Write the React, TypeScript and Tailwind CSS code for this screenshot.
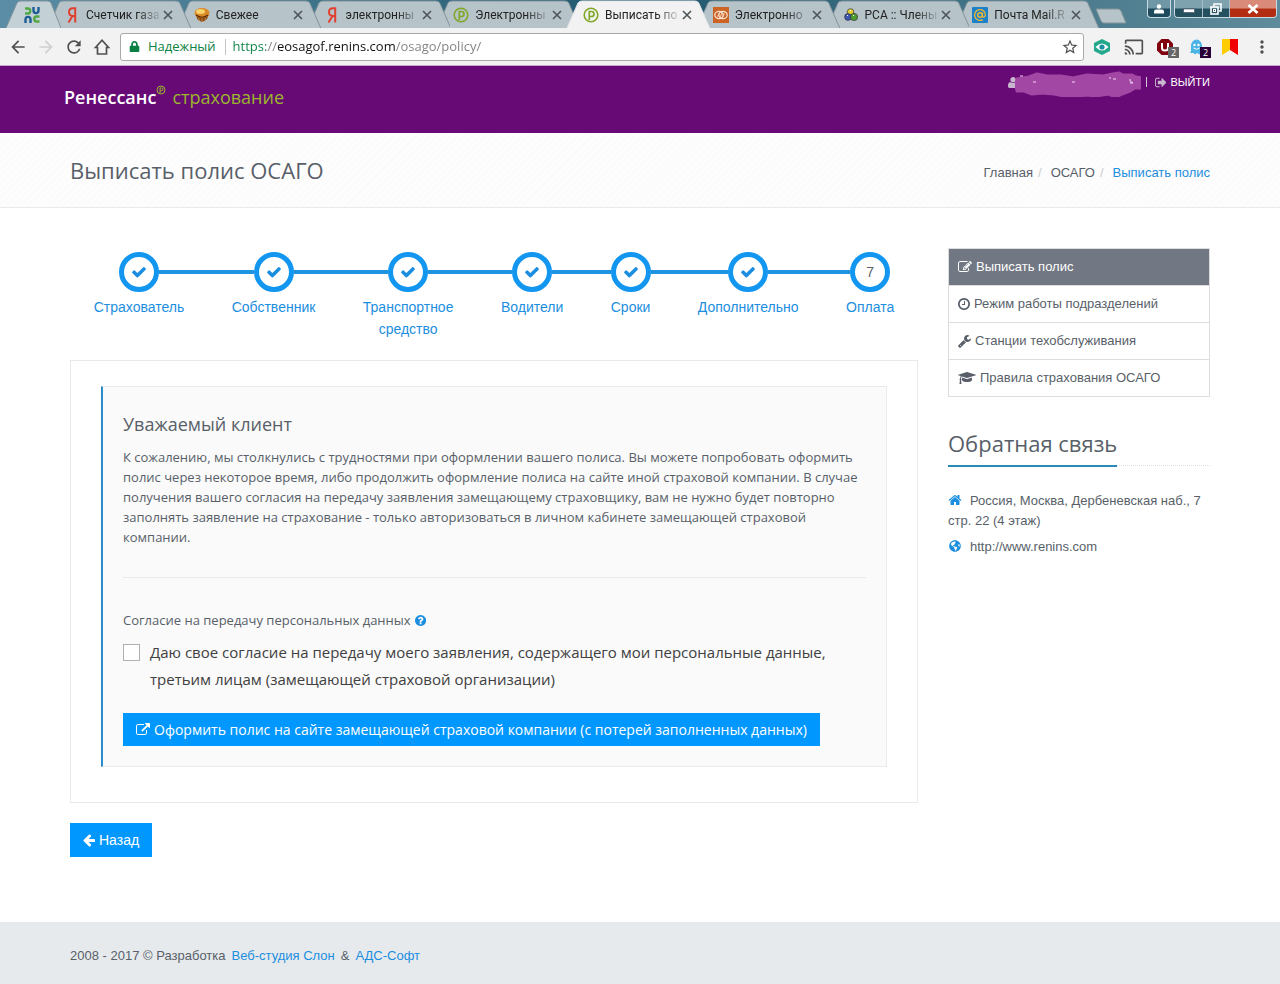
import { useState } from "react";
import type { ReactNode } from "react";
import { FaGlobeAmericas, FaLock } from "react-icons/fa";
import { MdArrowBack, MdArrowForward, MdCast, MdMoreVert, MdRefresh, MdStarBorder } from "react-icons/md";

// Font Awesome 4 glyphs, cut to their advance width: [viewBox, path]
const GLYPHS = {
  check: ["0 0 1792 1792", "M1671 566q0 40-28 68l-724 724-136 136q-28 28-68 28t-68-28l-136-136-362-362q-28-28-28-68t28-68l136-136q28-28 68-28t68 28l294 295 656-657q28-28 68-28t68 28l136 136q28 28 28 68z"],
  home: ["0 0 1792 1792", "M1472 992v480q0 26-19 45t-45 19h-384v-384h-256v384h-384q-26 0-45-19t-19-45v-480q0-1 .5-3t.5-3l575-474 575 474q1 2 1 6zm223-69l-62 74q-8 9-21 11h-3q-13 0-21-7l-692-577-692 577q-12 8-24 7-13-2-21-11l-62-74q-8-10-7-23.5t11-21.5l719-599q32-26 76-26t76 26l244 204v-195q0-14 9-23t23-9h192q14 0 23 9t9 23v408l219 182q10 8 11 21.5t-7 23.5z"],
  external: ["0 0 1792 1792", "M1408 928v320q0 119-84.5 203.5t-203.5 84.5h-832q-119 0-203.5-84.5t-84.5-203.5v-832q0-119 84.5-203.5t203.5-84.5h704q14 0 23 9t9 23v64q0 14-9 23t-23 9h-704q-66 0-113 47t-47 113v832q0 66 47 113t113 47h832q66 0 113-47t47-113v-320q0-14 9-23t23-9h64q14 0 23 9t9 23zm384-864v512q0 26-19 45t-45 19-45-19l-176-176-652 652q-10 10-23 10t-23-10l-114-114q-10-10-10-23t10-23l652-652-176-176q-19-19-19-45t19-45 45-19h512q26 0 45 19t19 45z"],
  edit: ["0 0 1792 1792", "M888 1184l116-116-152-152-116 116v56h96v96h56zm440-720q-16-16-33 1l-350 350q-17 17-1 33t33-1l350-350q17-17 1-33zm80 594v190q0 119-84.5 203.5t-203.5 84.5h-832q-119 0-203.5-84.5t-84.5-203.5v-832q0-119 84.5-203.5t203.5-84.5h832q63 0 117 25 15 7 18 23 3 17-9 29l-49 49q-14 14-32 8-23-6-45-6h-832q-66 0-113 47t-47 113v832q0 66 47 113t113 47h832q66 0 113-47t47-113v-126q0-13 9-22l64-64q15-15 35-7t20 29zm-96-738l288 288-672 672h-288v-288zm444 132l-92 92-288-288 92-92q28-28 68-28t68 28l152 152q28 28 28 68t-28 68z"],
  clock: ["128 0 1536 1792", "M1024 544v448q0 14-9 23t-23 9h-320q-14 0-23-9t-9-23v-64q0-14 9-23t23-9h224v-352q0-14 9-23t23-9h64q14 0 23 9t9 23zm416 352q0-148-73-273t-198-198-273-73-273 73-198 198-73 273 73 273 198 198 273 73 273-73 198-198 73-273zm224 0q0 209-103 385.5t-279.5 279.5-385.5 103-385.5-103-279.5-279.5-103-385.5 103-385.5 279.5-279.5 385.5-103 385.5 103 279.5 279.5 103 385.5z"],
  wrench: ["64 0 1664 1792", "M448 1472q0-26-19-45t-45-19-45 19-19 45 19 45 45 19 45-19 19-45zm644-420l-682 682q-37 37-90 37-52 0-91-37l-106-108q-38-36-38-90 0-53 38-91l681-681q39 98 114.5 173.5t173.5 114.5zm634-435q0 39-23 106-47 134-164.5 217.5t-258.5 83.5q-185 0-316.5-131.5t-131.5-316.5 131.5-316.5 316.5-131.5q58 0 121.5 16.5t107.5 46.5q16 11 16 28t-16 28l-293 169v224l193 107q5-3 79-48.5t135.5-81 70.5-35.5q15 0 23.5 10t8.5 25z"],
  cap: ["0 0 2304 1792", "M1774 836l18 316q4 69-82 128t-235 93.5-323 34.5-323-34.5-235-93.5-82-128l18-316 574 181q22 7 48 7t48-7zm530-324q0 23-22 31l-1120 352q-4 1-10 1t-10-1l-652-206q-43 34-71 111.5t-34 178.5q63 36 63 109 0 69-58 107l58 433q2 14-8 25-9 11-24 11h-192q-15 0-24-11-10-11-8-25l58-433q-58-38-58-107 0-73 65-111 11-207 98-330l-333-104q-22-8-22-31t22-31l1120-352q4-1 10-1t10 1l1120 352q22 8 22 31z"],
  question: ["128 0 1536 1792", "M1024 1376v-192q0-14-9-23t-23-9h-192q-14 0-23 9t-9 23v192q0 14 9 23t23 9h192q14 0 23-9t9-23zm256-672q0-88-55.5-163t-138.5-116-170-41q-243 0-371 213-15 24 8 42l132 100q7 6 19 6 16 0 25-12 53-68 86-92 34-24 86-24 48 0 85.5 26t37.5 59q0 38-20 61t-68 45q-63 28-115.5 86.5t-52.5 125.5v36q0 14 9 23t23 9h192q14 0 23-9t9-23q0-19 21.5-49.5t54.5-49.5q32-18 49-28.5t46-35 44.5-48 28-60.5 12.5-81zm384 192q0 209-103 385.5t-279.5 279.5-385.5 103-385.5-103-279.5-279.5-103-385.5 103-385.5 279.5-279.5 385.5-103 385.5 103 279.5 279.5 103 385.5z"],
  back: ["128 0 1536 1792", "M1664 896v128q0 53-32.5 90.5t-84.5 37.5h-704l293 294q38 36 38 90t-38 90l-75 76q-37 37-90 37-52 0-91-37l-651-652q-37-37-37-90 0-52 37-91l651-650q38-38 91-38 52 0 90 38l75 74q38 38 38 91t-38 91l-293 293h704q52 0 84.5 37.5t32.5 90.5z"],
  signout: ["64 0 1600 1792", "M704 1440q0 4 1 20t.5 26.5-3 23.5-10 19.5-20.5 6.5h-320q-119 0-203.5-84.5t-84.5-203.5v-704q0-119 84.5-203.5t203.5-84.5h320q13 0 22.5 9.5t9.5 22.5q0 4 1 20t.5 26.5-3 23.5-10 19.5-20.5 6.5h-320q-66 0-113 47t-47 113v704q0 66 47 113t113 47h312l11.5 1 11.5 3 8 5.5 7 9 2 13.5zm928-544q0 26-19 45l-544 544q-19 19-45 19t-45-19-19-45v-288h-448q-26 0-45-19t-19-45v-384q0-26 19-45t45-19h448v-288q0-26 19-45t45-19 45 19l544 544q19 19 19 45z"],
  user: ["192 0 1408 1792", "M1600 1405q0 120-73 189.5t-194 69.5h-874q-121 0-194-69.5t-73-189.5q0-53 3.5-103.5t14-109 26.5-108.5 43-97.5 62-81 85.5-53.5 111.5-20q9 0 42 21.5t74.5 48 108 48 133.5 21.5 133.5-21.5 108-48 74.5-48 42-21.5q61 0 111.5 20t85.5 53.5 62 81 43 97.5 26.5 108.5 14 109 3.5 103.5zm-320-893q0 159-112.5 271.5t-271.5 112.5-271.5-112.5-112.5-271.5 112.5-271.5 271.5-112.5 271.5 112.5 112.5 271.5z"],
};

type GlyphName = keyof typeof GLYPHS;

function Glyph({ name, className = "h-[14px]" }: { name: GlyphName; className?: string }) {
  const [box, d] = GLYPHS[name];
  return (
    <svg viewBox={box} className={`inline-block w-auto shrink-0 fill-current ${className}`} aria-hidden="true">
      <path d={d} />
    </svg>
  );
}

/* ---------- browser window ---------- */

const Yandex = () => (
  <svg viewBox="0 0 16 16" className="size-4 shrink-0" fill="none" stroke="#e0402f" strokeWidth="2">
    <path d="M11.2 15.5V1.2H9C6.3 1.2 5 2.8 5 5c0 2.400 1.400 3.900 4 3.900h2.200M8.500 9l-4 6.500" />
  </svg>
);

const Muffin = () => (
  <svg viewBox="0 0 16 16" className="size-4 shrink-0">
    <path d="M1.500 7l2 5.500Q8 17 13 12l2-5z" fill="#8a4a12" />
    <path d="M4.500 11l1 3M8 11.500v3M11.500 11l-.5 2.500" stroke="#c98a3c" strokeWidth="1" />
    <ellipse cx="8" cy="6" rx="7.500" ry="5" fill="#d98a26" />
    <ellipse cx="6.500" cy="4.500" rx="4.500" ry="2.500" fill="#f9d36a" />
    <path d="M2 8q6 4.500 12 0" stroke="#5c2a06" strokeWidth="1.200" fill="none" />
  </svg>
);

const Renins = () => (
  <svg viewBox="0 0 16 16" className="size-4 shrink-0" fill="none" stroke="#80a828">
    <circle cx="8" cy="8" r="6.800" strokeWidth="1.600" />
    <path d="M6.300 13V4.500h2.200a2.500 2.500 0 0 1 0 5H6.300" strokeWidth="1.700" />
  </svg>
);

const Rings = () => (
  <svg viewBox="0 0 16 16" className="size-4 shrink-0" fill="none" stroke="#fbe3d0">
    <rect width="16" height="16" fill="#cd6426" stroke="none" />
    <ellipse cx="6" cy="8" rx="4.200" ry="3.600" strokeWidth="1.200" />
    <ellipse cx="10" cy="8" rx="4.200" ry="3.600" strokeWidth="1.200" />
    <path d="M4.500 9.500l2-3.500M7 10l2-4M9.500 10l2-3.500" strokeWidth=".9" />
  </svg>
);

const Cubes = () => (
  <svg viewBox="0 0 16 16" className="size-4 shrink-0" stroke="#333" strokeWidth=".7">
    <circle cx="7.500" cy="5" r="3.300" fill="#e3cf2c" />
    <circle cx="5" cy="10" r="3.400" fill="#3f55b5" />
    <circle cx="11" cy="10" r="3.600" fill="#4d9c2f" />
    <path d="M4 9l1-1M10 9l1-1M7 4l1-1" stroke="#fff" strokeWidth="1" />
  </svg>
);

const MailRu = () => (
  <svg viewBox="0 0 16 16" className="size-4 shrink-0" fill="none">
    <rect width="16" height="16" rx="1" fill="#1b82c8" />
    <circle cx="8" cy="8" r="2.300" stroke="#f2b632" strokeWidth="1.400" />
    <path d="M10.400 5.500v3.300c0 2 3 1.700 3-.8A5.400 5.400 0 1 0 10.800 12.600" stroke="#f2b632" strokeWidth="1.300" />
  </svg>
);

const PinnedLogo = () => (
  <svg viewBox="0 0 16 16" className="size-4" fill="none" strokeWidth="2.400">
    <path d="M1 1.500h3c3 0 3 5 0 5H1" stroke="#52a844" />
    <path d="M9.500 0v3.500c0 3.500 5 3.500 5 0V0" stroke="#1f5d94" />
    <path d="M1.500 16v-3.500c0-3.500 5-3.500 5 0V16" stroke="#1f5d94" />
    <path d="M15.500 9.500h-3c-3 0-3 5 0 5h3" stroke="#52a844" />
  </svg>
);

const TABS = [
  { title: "Счетчик газа", icon: <Yandex /> },
  { title: "Свежее", icon: <Muffin /> },
  { title: "электронны", icon: <Yandex /> },
  { title: "Электронны", icon: <Renins /> },
  { title: "Выписать по", icon: <Renins />, active: true },
  { title: "Электронно", icon: <Rings /> },
  { title: "РСА :: Члены", icon: <Cubes /> },
  { title: "Почта Mail.R", icon: <MailRu /> },
];

function TabShape({ active = false }: { active?: boolean }) {
  return (
    <svg viewBox="0 0 143 28" preserveAspectRatio="none" className="absolute inset-0 -z-10 size-full" aria-hidden="true">
      <path
        d="M0 28L11 3Q12 1 15 1H128Q131 1 132 3L143 28"
        className={active ? "fill-[#f2f2f2]" : "fill-[#b6c3c9]"}
        stroke={active ? "#dfe4e6" : "#82949b"}
        strokeWidth="1"
      />
    </svg>
  );
}

function BrowserTab({ title, icon, active = false, order }: { title: string; icon: ReactNode; active?: boolean; order: number }) {
  return (
    <div className="relative isolate -ml-[13px] flex h-7 min-w-0 flex-1 items-center pt-px pr-[18px] pl-4" style={{ zIndex: active ? 30 : order }}>
      <TabShape active={active} />
      {icon}
      <span className="ml-[6px] min-w-0 flex-1 overflow-hidden whitespace-nowrap text-[#222] [mask-image:linear-gradient(to_right,#000_70%,transparent_105%)]">{title}</span>
      <button type="button" aria-label="Закрыть вкладку" className="ml-1 flex size-[10px] items-center justify-center text-[#4c5459]">
        <svg viewBox="0 0 10 10" className="size-[10px]" stroke="currentColor" strokeWidth="1.600">
          <path d="M1 1l8 8M9 1L1 9" />
        </svg>
      </button>
    </div>
  );
}

function WindowControls() {
  return (
    <div className="mr-[3px] ml-4 flex h-[18px] shrink-0 gap-[3px] text-white">
      <button type="button" aria-label="Профиль" className="flex w-[24px] items-center justify-center rounded-b border border-t-0 border-[#c9dbe1] bg-linear-to-b from-[#6f97a6] from-45% to-[#1d4a5c] to-55%">
        <svg viewBox="0 0 12 12" className="size-3 fill-current"><circle cx="6" cy="3.500" r="2.200" /><path d="M1 10.500V8.500q0-2 2-2h6q2 0 2 2v2z" /></svg>
      </button>
      <div className="flex overflow-hidden rounded-b border border-t-0 border-[#c9dbe1]">
        <button type="button" aria-label="Свернуть" className="flex w-[28px] items-center justify-center border-r border-[#a9bfc7] bg-linear-to-b from-[#7fa2af] from-45% to-[#24505f] to-55%">
          <svg viewBox="0 0 12 12" className="size-3 fill-current stroke-[#445]"><rect x=".5" y="6" width="11" height="3.500" strokeWidth=".6" /></svg>
        </button>
        <button type="button" aria-label="Развернуть" className="flex w-[27px] items-center justify-center border-r border-[#a9bfc7] bg-linear-to-b from-[#7fa2af] from-45% to-[#24505f] to-55%">
          <svg viewBox="0 0 12 12" className="size-3" fill="none" stroke="currentColor" strokeWidth="1.600"><path d="M4 3V1h7v7H9" /><rect x="1" y="4" width="7" height="7" /><rect x="3.500" y="6.500" width="2" height="2" strokeWidth="1" /></svg>
        </button>
        <button type="button" aria-label="Закрыть" className="flex w-[46px] items-center justify-center bg-linear-to-b from-[#d98a78] from-45% to-[#b32d12] to-55%">
          <svg viewBox="0 0 12 12" className="size-3" stroke="currentColor" strokeWidth="2.800"><path d="M1.500 2l9 8M10.500 2l-9 8" /></svg>
        </button>
      </div>
    </div>
  );
}

function BrowserChrome() {
  return (
    <div className="font-['Open_Sans',sans-serif] text-xs">
      <div className="flex h-7 items-start bg-linear-to-r from-[#5b8ea6] via-[#1f586e] to-[#5f8c9c] pl-[6px] font-['Roboto',sans-serif]">
        <div className="relative isolate z-20 flex h-7 w-[55px] shrink-0 items-center justify-center pt-px pr-1">
          <svg viewBox="0 0 55 28" className="absolute inset-0 -z-10 size-full" aria-hidden="true">
            <path d="M0 28L11 3Q12 1 15 1H41Q44 1 45 3L55 28" fill="#c3d0d5" stroke="#82949b" />
          </svg>
          <PinnedLogo />
        </div>
        <div className="flex min-w-0 flex-1">
          {TABS.map((tab, i) => (
            <BrowserTab key={i} {...tab} order={TABS.length - i} />
          ))}
        </div>
        <button type="button" aria-label="Новая вкладка" className="mt-2 -ml-1 mr-1 shrink-0">
          <svg viewBox="0 0 32 16" className="h-4 w-8"><path d="M1 1h22q2 0 3 2l5 12H9q-2 0-3-2z" fill="#b6c3c9" stroke="#82949b" /></svg>
        </button>
        <WindowControls />
      </div>
      <div className="flex h-[38px] items-center border-b border-[#c9a6d3] bg-[#f2f2f2] pr-2 pl-2 text-[#505050]">
        <div className="flex shrink-0 items-center gap-2 pr-2">
          <button type="button" aria-label="Назад"><MdArrowBack className="size-5" /></button>
          <button type="button" aria-label="Вперед" className="text-[#cfcfcf]"><MdArrowForward className="size-5" /></button>
          <button type="button" aria-label="Обновить"><MdRefresh className="size-5" /></button>
          <button type="button" aria-label="Домой">
            <svg viewBox="0 0 20 20" className="size-5" fill="none" stroke="currentColor" strokeWidth="1.700"><path d="M3.500 10.500L10 3.200l6.500 7.300h-2V17h-9v-6.500z" /></svg>
          </button>
        </div>
        <div className="flex h-7 min-w-0 flex-1 items-center rounded-[3px] border border-[#a9a9a9] bg-white pr-1 pl-2 text-[13px]">
          <FaLock className="mr-2 size-[11px] text-[#0b8043]" />
          <label htmlFor="address" className="mr-[9px] text-[#0b8043]">Надежный</label>
          <span className="mr-[7px] h-4 w-px bg-[#c4c4c4]" />
          <input
            id="address"
            type="text"
            defaultValue="https://eosagof.renins.com/osago/policy/"
            className="min-w-0 flex-1 bg-[linear-gradient(to_right,#0b8043_0_33px,#808080_33px_45px,#111_45px_163px,#808080_163px)] bg-clip-text text-transparent outline-none"
          />
          <MdStarBorder className="size-[18px]" />
        </div>
        <div className="flex shrink-0 items-center pl-2">
          <svg viewBox="0 0 20 20" className="mr-3 size-5"><path d="M10 2l8 4v8l-8 4-8-4V6z" fill="#23a88b" /><path d="M3.500 10q6.500-7 13 0-6.500 7-13 0z" fill="#fff" /><circle cx="10" cy="10" r="2.600" fill="#1d8fa0" /></svg>
          <MdCast className="mr-3 size-5" />
          <span className="relative mr-3 size-5">
            <svg viewBox="0 0 20 20" className="size-5"><path d="M5.500 2h7L17 6.500v7L12.500 18h-7L1 13.500v-7z" fill="#800010" /><path d="M6 6v5q0 2.500 3 2.500t3-2.500V6" fill="none" stroke="#fff" strokeWidth="2" /></svg>
            <span className="absolute top-[10px] left-[12px] h-[11px] w-[11px] bg-[#666] text-center text-[9px] leading-[11px] text-white">2</span>
          </span>
          <span className="relative mr-3 size-5">
            <svg viewBox="0 0 20 20" className="size-5"><path d="M3 9a5.500 6.500 0 0 1 11 0v5l2 2h-3l-1.500 1.500L9 16l-2 1.500L5.500 16H2l1-2z" fill="#4db4e6" /><circle cx="6.500" cy="8" r="1.200" fill="#fff" /><circle cx="10.500" cy="8" r="1.200" fill="#fff" /><path d="M5.500 11q3 2.500 6 0" stroke="#fff" fill="none" /></svg>
            <span className="absolute top-[10px] left-[12px] h-[11px] w-[11px] bg-[#2a0038] text-center text-[9px] leading-[11px] text-white">2</span>
          </span>
          <svg viewBox="0 0 20 20" className="mr-3 size-5"><path d="M2 2h8v11l-8 5z" fill="#fc0" /><path d="M10 2h8v16l-8-5z" fill="#f00000" /></svg>
          <MdMoreVert className="size-5" />
        </div>
      </div>
    </div>
  );
}

/* ---------- page ---------- */

const STEPS = ["Страхователь", "Собственник", "Транспортное\nсредство", "Водители", "Сроки", "Дополнительно", "Оплата"];

const MENU: { icon: GlyphName; text: string; active?: boolean }[] = [
  { icon: "edit", text: "Выписать полис", active: true },
  { icon: "clock", text: "Режим работы подразделений" },
  { icon: "wrench", text: "Станции техобслуживания" },
  { icon: "cap", text: "Правила страхования ОСАГО" },
];

function Header() {
  return (
    <header className="bg-[#670a76]">
      <div className="mx-auto flex h-[67px] max-w-[1152px] items-start justify-between pr-[6px]">
        <a href="#" className="mt-[17px] flex items-baseline font-['Open_Sans',sans-serif] text-[18px] leading-7">
          <span className="font-semibold text-white">Ренессанс</span>
          <svg viewBox="0 0 10 10" className="mt-[2px] mr-[6px] size-[10px] self-start" fill="none" stroke="#9bb52c">
            <circle cx="5" cy="5" r="4" strokeWidth="1" />
            <path d="M4 8V3h1.500a1.400 1.400 0 0 1 0 2.800H4" strokeWidth="1" />
          </svg>
          <span className="text-[#9bb52c]">страхование</span>
        </a>
        <div className="mt-[6px] flex h-5 items-center text-[11px] text-white">
          <Glyph name="user" className="h-[13px] text-[#c9b6cf]" />
          <svg viewBox="0 0 126 26" className="-ml-[3px] h-[26px] w-[126px] translate-y-[2px]" aria-hidden="true">
            <path
              d="M2 8l12-2 8-3 10 2 14 0 12 2 14-3 16 1 10-2 6-1 4 2 9 0 4 2 7 1 1 6-2 4-7 0-5 3-8 3-6 3-8-3-12 2-9-1-8 1-3 2-3-2-9 0-10-2-12-1-10 1-8-3-7 0-1-5z"
              fill="#a347a5"
              stroke="#a347a5"
              strokeWidth="3"
              strokeLinejoin="round"
            />
            <path d="M5 5h3M18 11h3M57 11h3M94 7h2M98 8h3M115 8v2l3 2h-3" stroke="#f0dcf2" fill="none" />
          </svg>
          <span className="mr-2 ml-[5px] h-[10px] w-px bg-[#d9c6dd]" />
          <a href="#" className="flex items-center gap-1">
            <Glyph name="signout" className="h-[13px] text-[#c9b6cf]" />
            ВЫЙТИ
          </a>
        </div>
      </div>
    </header>
  );
}

function TitleBar() {
  return (
    <div className="border-b border-[#eaeaea] bg-[repeating-linear-gradient(135deg,#fbfbfb_0_2px,#fdfdfd_2px_5px)]">
      <div className="mx-auto flex h-[74px] max-w-[1140px] items-center justify-between">
        <h1 className="font-['Open_Sans',sans-serif] text-[22px]">Выписать полис ОСАГО</h1>
        <nav className="mt-[6px] flex text-[13px]">
          <a href="#">Главная</a>
          <span className="mr-[9px] ml-[5px] text-[#ccc]">/</span>
          <a href="#">ОСАГО</a>
          <span className="mr-[9px] ml-[5px] text-[#ccc]">/</span>
          <a href="#" className="text-[#1c8ee0]">Выписать полис</a>
        </nav>
      </div>
    </div>
  );
}

function Steps() {
  return (
    <ol className="flex pt-1 text-sm leading-[22px]">
      {STEPS.map((label, i) => {
        const last = i === STEPS.length - 1;
        return (
          <li key={label} className="flex flex-auto flex-col items-center">
            <div className="flex w-full items-center">
              <span className={`h-1 flex-1 ${i === 0 ? "" : "bg-[#1e94e0]"}`} />
              <span className="flex size-10 items-center justify-center rounded-full border-[5px] border-[#1296f0] bg-white">
                {last ? i + 1 : <Glyph name="check" className="h-4 text-[#1c8ee0]" />}
              </span>
              <span className={`h-1 flex-1 ${last ? "" : "bg-[#1e94e0]"}`} />
            </div>
            <a href="#" className="mt-1 px-5 text-center whitespace-pre text-[#1c8ee0]">{label}</a>
          </li>
        );
      })}
    </ol>
  );
}

function ClientNotice() {
  const [agree, setAgree] = useState(false);

  return (
    <div className="mt-5 border border-[#eaeaea] px-[30px] pt-[25px] pb-[35px]">
      <section className="border border-l-2 border-[#eaeaea] border-l-[#2a8cc8] bg-[#fafafa] p-5 font-['Open_Sans',sans-serif] text-[13px] leading-5">
        <h2 className="pt-1 pb-[10px] text-[18px] leading-[26px]">Уважаемый клиент</h2>
        <p>
          К сожалению, мы столкнулись с трудностями при оформлении вашего полиса. Вы можете попробовать оформить полис через некоторое время, либо
          продолжить оформление полиса на сайте иной страховой компании. В случае получения вашего согласия на передачу заявления замещающему
          страховщику, вам не нужно будет повторно заполнять заявление на страхование - только авторизоваться в личном кабинете замещающей страховой
          компании.
        </p>
        <hr className="mt-[30px] mb-8 border-[#eaeaea]" />
        <p className="flex items-center gap-1">
          Согласие на передачу персональных данных
          <Glyph name="question" className="h-[13px] text-[#1c8ee0]" />
        </p>
        <label className="mt-[9px] flex items-start gap-[10px] text-[15px] leading-[27px] text-[#404040]">
          <input
            type="checkbox"
            checked={agree}
            onChange={(e) => setAgree(e.target.checked)}
            className="mt-[5px] size-[17px] shrink-0 appearance-none border border-[#b0b0b0] bg-white checked:bg-[#0097ff]"
          />
          <span>Даю свое согласие на передачу моего заявления, содержащего мои персональные данные, третьим лицам (замещающей страховой организации)</span>
        </label>
        <button type="button" className="mt-5 flex h-[33px] items-center gap-1 bg-[#0097ff] px-[13px] text-sm text-white">
          <Glyph name="external" />
          Оформить полис на сайте замещающей страховой компании (с потерей заполненных данных)
        </button>
      </section>
    </div>
  );
}

function Sidebar() {
  return (
    <aside className="text-[13px] leading-5">
      <ul className="border border-[#ddd]">
        {MENU.map(({ icon, text, active }) => (
          <li key={text} className="border-b border-[#ddd] last:border-b-0">
            <a href="#" className={`flex h-9 items-center gap-1 px-[9px] ${active ? "bg-[#717883] text-white" : ""}`}>
              <Glyph name={icon} />
              {text}
            </a>
          </li>
        ))}
      </ul>
      <div className="mt-[30px] flex items-end">
        <h2 className="border-b-2 border-[#2a8cb4] pb-[6px] font-['Open_Sans',sans-serif] text-[22px] leading-8">Обратная связь</h2>
        <span className="mb-px flex-1 border-b border-dotted border-[#ddd]" />
      </div>
      <address className="mt-6 not-italic">
        <p>
          <Glyph name="home" className="mr-2 -mt-1 h-[14px] text-[#1c8ee0]" />
          Россия, Москва, Дербеневская наб., 7 стр. 22 (4 этаж)
        </p>
        <p className="mt-[6px]">
          <FaGlobeAmericas className="mr-[9px] -mt-1 ml-px inline size-3 text-[#1c8ee0]" />
          http://www.renins.com
        </p>
      </address>
    </aside>
  );
}

export default function App() {
  return (
    <div className="flex min-h-screen flex-col bg-white font-['Liberation_Sans',Arial,sans-serif] text-[#585f69]">
      <BrowserChrome />
      <Header />
      <TitleBar />
      <main className="mx-auto grid w-full max-w-[1140px] grid-cols-[minmax(0,1fr)_262px] gap-[30px] pt-10 pb-10">
        <div>
          <Steps />
          <ClientNotice />
          <button type="button" className="mt-5 flex h-[34px] items-center gap-1 bg-[#0097ff] px-[13px] text-sm text-white">
            <Glyph name="back" />
            Назад
          </button>
        </div>
        <Sidebar />
      </main>
      <footer className="mt-auto bg-[#e6eaed]">
        <div className="mx-auto flex h-[62px] max-w-[1140px] items-center gap-[6px] pt-[6px] text-[13px]">
          <span>2008 - 2017 © Разработка</span>
          <a href="#" className="text-[#1c8ee0]">Веб-студия Слон</a>
          <span>&amp;</span>
          <a href="#" className="text-[#1c8ee0]">АДС-Софт</a>
        </div>
      </footer>
    </div>
  );
}
